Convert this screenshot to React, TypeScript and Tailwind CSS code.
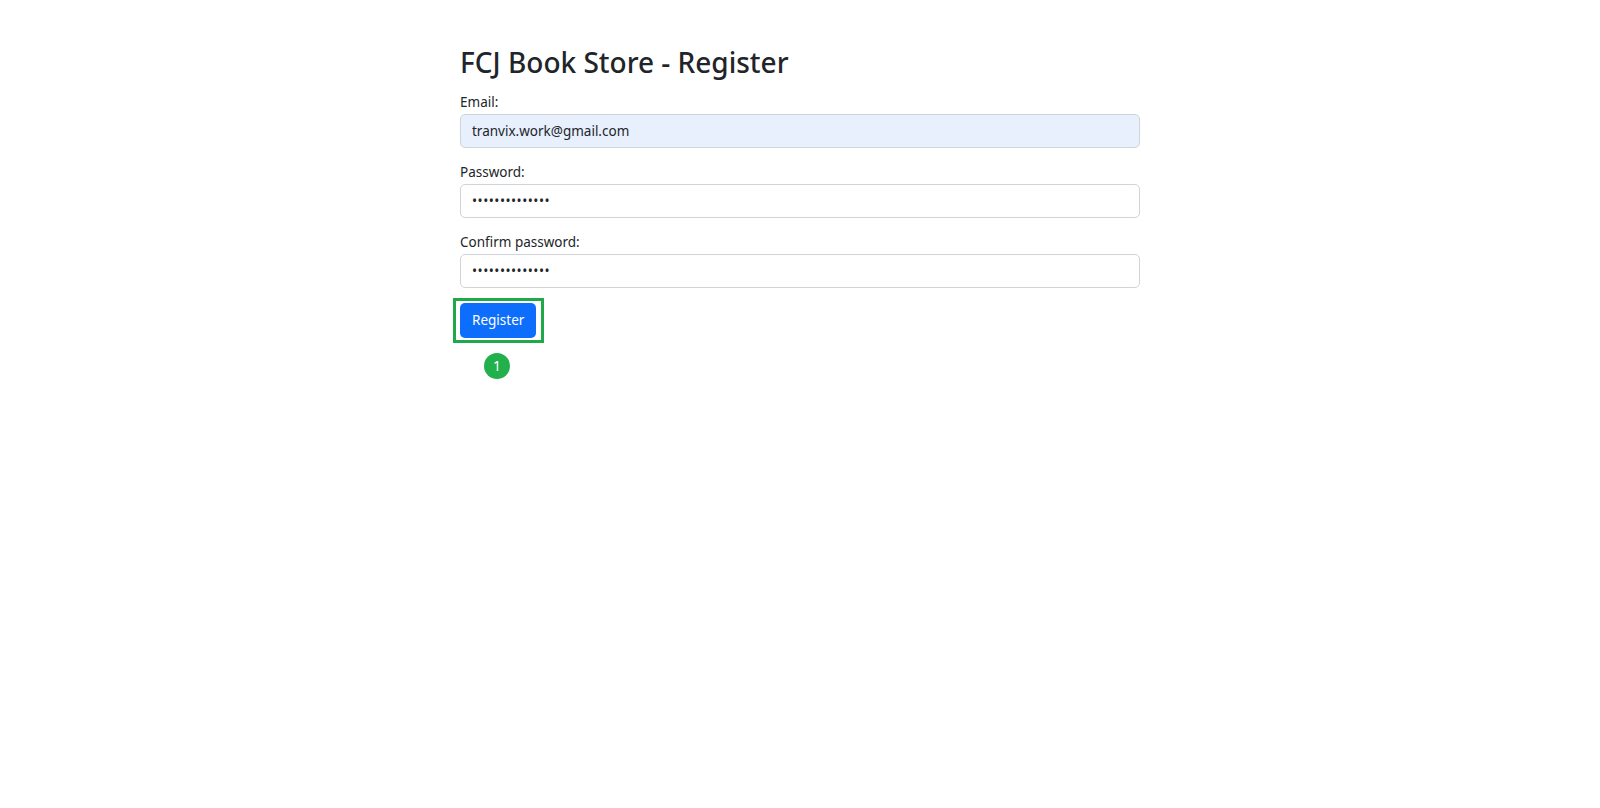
import React from "react";

const font = { fontFamily: '"Noto Sans", "Open Sans", sans-serif' };

function Field({
  id,
  label,
  type,
  value,
  filled,
}: {
  id: string;
  label: string;
  type: string;
  value: string;
  filled?: boolean;
}) {
  return (
    <div className="mb-[14px] flex flex-col">
      <label htmlFor={id} className="mb-px text-[13.5px] leading-[21px] text-[#212529]">
        {label}
      </label>
      <input
        id={id}
        type={type}
        defaultValue={value}
        readOnly
        className={
          "h-[34px] w-full rounded-[5px] border border-[#ced4da] px-[11px] text-[13.5px] text-[#212529] outline-none " +
          (type === "password" ? "tracking-[0.5px] " : "") +
          (filled ? "bg-[#e8f0fe]" : "bg-white")
        }
      />
    </div>
  );
}

export default function App() {
  return (
    <div className="min-h-screen bg-white" style={font}>
      <div className="mx-auto w-[680px] pt-[46px]">
        <h2 className="mb-[12px] text-[28px] font-medium leading-[1.2] text-[#212529]">
          FCJ Book Store - Register
        </h2>
        <form className="flex flex-col">
          <Field id="email" label="Email:" type="email" value="tranvix.work@gmail.com" filled />
          <Field id="password" label="Password:" type="password" value="abcdefghijklmn" />
          <Field id="confirm" label="Confirm password:" type="password" value="abcdefghijklmn" />
          <div className="relative mt-px self-start">
            <button
              type="button"
              className="h-[35px] rounded-[5px] bg-[#0d6efd] px-[12px] text-[13.5px] text-white"
            >
              Register
            </button>
            <span className="pointer-events-none absolute -bottom-[5px] -left-[7px] -right-[8px] -top-[5px] border-[3px] border-[#20a84a]" />
            <span className="absolute left-[24px] top-[50px] flex h-[26px] w-[26px] items-center justify-center rounded-full bg-[#21b04b] text-[14px] text-white">
              1
            </span>
          </div>
        </form>
      </div>
    </div>
  );
}
